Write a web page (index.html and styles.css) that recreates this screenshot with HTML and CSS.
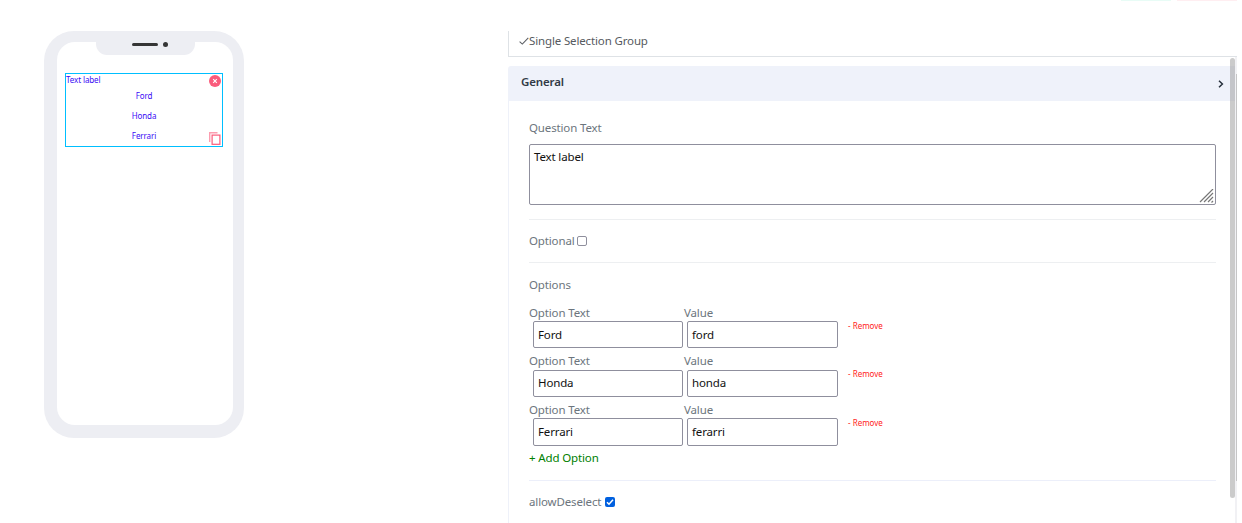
FILE: index.html
```html
<!DOCTYPE html>
<html lang="en">
<head>
<meta charset="utf-8">
<title>Form builder</title>
<link rel="stylesheet" href="styles.css">
</head>
<body>
<main class="builder">
  <section class="phone">
    <div class="phone-screen">
      <div class="notch"><span class="speaker"></span><span class="camera"></span></div>
      <div class="widget">
        <p class="widget-label"><span>Text label</span></p>
        <p class="choice">Ford</p>
        <p class="choice">Honda</p>
        <p class="choice">Ferrari</p>
        <svg class="delete" viewBox="0 0 12 12"><circle cx="6" cy="6" r="6" fill="#fa5c7c"/><path d="M4.2 4.2l3.6 3.6M7.8 4.2L4.2 7.8" stroke="#fff" stroke-width="1.1"/></svg>
        <svg class="copy" viewBox="0 0 12 13"><path d="M.7 10V.7H8.5" fill="none" stroke="#fc9db0" stroke-width="1.4"/><rect x="3.1" y="3.1" width="7.8" height="9.2" fill="none" stroke="#fa5c7c" stroke-width="1.2"/></svg>
      </div>
    </div>
  </section>
  <section class="panel">
    <div class="actions"><span class="action save"></span><span class="action cancel"></span></div>
    <header class="panel-title">
      <svg class="tick" viewBox="0 0 10 8"><path d="M.6 4.7l2.7 2.4L9.3.8" fill="none" stroke="#5c5f64" stroke-width="1.1"/></svg><span>Single Selection Group</span>
    </header>
    <div class="group-head"><span>General</span><svg viewBox="0 0 6 8"><path d="M1 .8L4.4 4 1 7.2" fill="none" stroke="#26303c" stroke-width="1.5"/></svg></div>
    <div class="group-body">
      <div class="row question"><span>Question Text</span></div>
      <div class="textarea"><span>Text label</span><svg viewBox="0 0 15 14"><path d="M1 13L14 0M5 13l9-9M9 13l5-5M12.5 13.5L14 12" stroke="#777" stroke-width="1.2"/></svg></div>
      <div class="row optional"><span>Optional</span><span class="check"></span></div>
      <div class="row options"><span>Options</span></div>
      <div class="option">
        <label class="key">Option Text<span class="input">Ford</span></label><label class="value">Value<span class="input">ford</span></label><span class="remove">- Remove</span>
      </div>
      <div class="option second">
        <label class="key">Option Text<span class="input">Honda</span></label><label class="value">Value<span class="input">honda</span></label><span class="remove">- Remove</span>
      </div>
      <div class="option third">
        <label class="key">Option Text<span class="input">Ferrari</span></label><label class="value">Value<span class="input">ferarri</span></label><span class="remove">- Remove</span>
      </div>
      <div class="row add"><span>+ Add Option</span></div>
      <div class="row deselect"><span>allowDeselect</span><span class="check checked"><svg viewBox="0 0 10 10"><path d="M2 5.2l2 2L8 2.8" fill="none" stroke="#fff" stroke-width="1.5"/></svg></span></div>
    </div>
    <span class="bar inner"></span><span class="track"></span><span class="bar outer"></span>
  </section>
</main>
</body>
</html>
```
FILE: styles.css
```css
* { box-sizing: border-box; }
body { margin: 0; background: #fff; color: #6c757d; font: 11.5px/16px "Noto Sans", "Open Sans", sans-serif; letter-spacing: -0.14px; overflow: hidden; }
p { margin: 0; }
svg { display: block; flex: none; }
.builder { display: flex; width: 1242px; height: 523px; padding-left: 44px; overflow: hidden; }
.phone { width: 200px; height: 407px; margin: 31px 264px 0 0; padding: 11px 11px 13px 13px; border-radius: 30px; background: #edeef3; flex: none; }
.phone-screen { height: 383px; border-radius: 18px; background: #fff; }
.notch { position: relative; top: -1px; display: flex; align-items: center; justify-content: center; gap: 5px; width: 99px; height: 14px; margin-left: 39px; padding: 0 0 7px 9px; border-radius: 0 0 11px 11px; background: #edeef3; }
.speaker { width: 26px; height: 3px; border-radius: 2px; background: #353535; }
.camera { width: 5px; height: 5px; border-radius: 50%; background: #353535; }
.widget { position: relative; width: 158px; height: 74px; margin: 17px 0 0 8px; border: 1px solid #00bfff; color: #3a0cf5; font-size: 8px; letter-spacing: -0.1px; }
.widget-label { height: 12px; line-height: 12px; }
.choice { height: 20px; line-height: 20px; text-align: center; }
.delete { position: absolute; right: 1px; top: 1px; width: 12px; height: 12px; }
.copy { position: absolute; right: 1px; bottom: 1px; width: 12px; height: 13px; }
.panel { position: relative; width: 729px; flex: none; }
.actions { display: flex; justify-content: flex-end; gap: 6px; height: 31px; }
.action { height: 1px; background: #e8fcf6; }
.save { width: 50px; }
.cancel { width: 60px; background: #ffeef1; }
.panel-title { display: flex; align-items: center; height: 26px; padding: 0 0 5px 10px; border: solid #dee2e6; border-width: 0 0 1px 1px; color: #565a60; }
.tick { width: 10px; height: 8px; }
.group-head { display: flex; justify-content: space-between; align-items: center; height: 35px; margin-top: 9px; padding: 0 13px 3px 13px; background: #eff2fa; color: #313a46; font-weight: 600; letter-spacing: -0.15px; border-radius: 3px 0 0 0; }
.group-head svg { width: 6px; height: 8px; margin-top: 3px; }
.group-body { height: 422px; padding: 19px 21px 0 20px; border-left: 1px solid #eef1f9; }
.row { display: flex; align-items: center; gap: 4px; }
.question { height: 16px; margin-bottom: 8px; }
.textarea { position: relative; height: 61px; padding: 4px; border: 1px solid #8f8f9d; border-radius: 2px; color: #111; }
.textarea svg { position: absolute; right: 1px; bottom: 1px; width: 15px; height: 14px; }
.optional { gap: 2px; height: 44px; margin-top: 14px; border: solid #edeff1; border-width: 1px 0; }
.options { height: 16px; margin: 14px 0 12px; }
.check { width: 10px; height: 10px; border: 1px solid #8f8f9d; border-radius: 2px; }
.checked { border: 0; background: #0060df; }
.checked svg { width: 10px; height: 10px; }
.option { display: flex; height: 48px; }
.second { height: 49px; }
.key { width: 155px; }
.value { width: 154px; }
.input { display: flex; align-items: center; width: 150px; height: 27px; margin-left: 4px; padding-left: 4px; border: 1px solid #8f8f9d; border-radius: 2px; color: #111; }
.second .input { margin-top: 1px; padding-bottom: 1px; }
.third .input { height: 28px; }
.value .input { width: 151px; margin-left: 3px; }
.remove { margin: 13px 0 0 10px; height: 16px; color: #f22; font-size: 8px; letter-spacing: 0; }
.add { height: 16px; color: green; }
.deselect { height: 43px; margin-top: 14px; border-top: 1px solid #eceffa; }
.bar { position: absolute; background: rgba(160,160,160,.55); }
.inner { left: 722px; top: 58px; width: 5px; height: 440px; border-radius: 3px; }
.track { position: absolute; left: 727px; top: 57px; width: 2px; height: 466px; background: #f1f1f4; }
.outer { left: 728px; top: 74px; width: 1px; height: 407px; }
```
